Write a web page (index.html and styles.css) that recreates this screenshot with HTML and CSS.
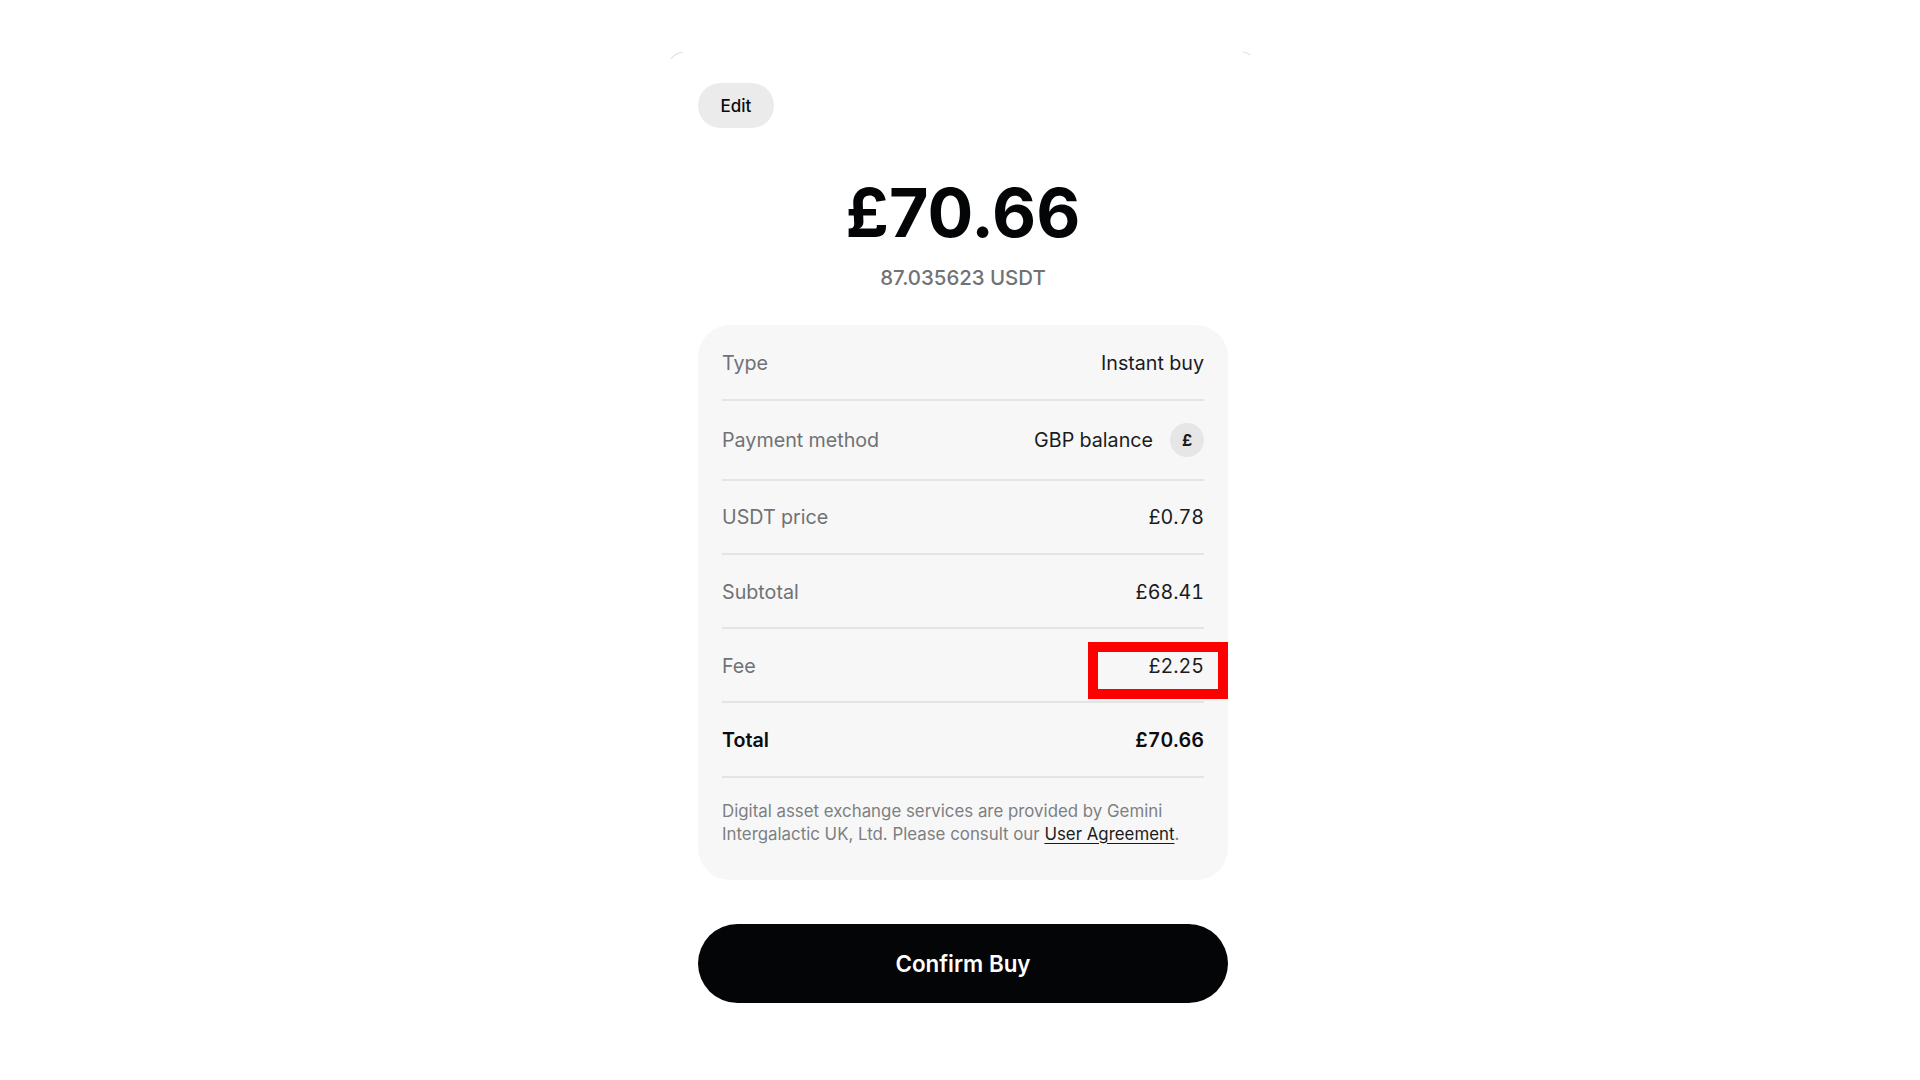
FILE: index.html
```html
<!DOCTYPE html>
<html lang="en">
<head>
<meta charset="utf-8">
<title>Confirm Buy</title>
<link rel="stylesheet" href="styles.css">
</head>
<body>
<main class="sheet">
  <svg class="corner corner-left" width="14" height="9" viewBox="0 0 14 9" aria-hidden="true"><path d="M1 8Q5 2 13 1" fill="none" stroke="#e2e2e2" stroke-width="1.2"/></svg>
  <svg class="corner corner-right" width="9" height="5" viewBox="0 0 9 5" aria-hidden="true"><path d="M1 1Q5 1.5 8 4" fill="none" stroke="#e2e2e2" stroke-width="1.2"/></svg>
  <button class="edit" type="button">Edit</button>
  <header class="summary">
    <h1 class="amount">£70.66</h1>
    <p class="crypto">87.035623 USDT</p>
  </header>
  <section class="card">
    <div class="row row-type"><span class="label">Type</span><span class="value">Instant buy</span></div>
    <div class="row row-pay"><span class="label">Payment method</span><span class="value value-pay">GBP balance<span class="coin">£</span></span></div>
    <div class="row"><span class="label">USDT price</span><span class="value">£0.78</span></div>
    <div class="row row-nudge"><span class="label">Subtotal</span><span class="value">£68.41</span></div>
    <div class="row row-nudge"><span class="label">Fee</span><span class="value">£2.25</span><span class="highlight"></span></div>
    <div class="row row-total"><span class="label">Total</span><span class="value">£70.66</span></div>
    <p class="legal">Digital asset exchange services are provided by Gemini Intergalactic UK, Ltd. Please consult our <a href="#">User Agreement</a>.</p>
  </section>
  <button class="confirm" type="button">Confirm Buy</button>
</main>
</body>
</html>
```
FILE: styles.css
```css
* { box-sizing: border-box; }
html, body { margin: 0; height: 100%; background: #fff; }
body {
  display: flex;
  justify-content: center;
  padding-left: 6px;
  font-family: Inter, "Liberation Sans", sans-serif;
  color: #0b0c0e;
}
.sheet {
  position: relative;
  width: 530px;
  padding-top: 83px;
  display: flex;
  flex-direction: column;
}
.corner { position: absolute; top: 51px; }
.corner-left { left: -28px; }
.corner-right { right: -23px; }
.edit {
  align-self: flex-start;
  width: 76px;
  height: 45px;
  border: 0;
  border-radius: 23px;
  background: #ebebeb;
  font: 500 17px Inter, sans-serif;
  color: #0b0c0e;
  padding: 0;
}
.summary { text-align: center; height: 197px; padding-top: 46px; }
.amount { margin: 0; font-size: 68px; line-height: 76px; font-weight: 700; color: #040506; letter-spacing: 0; }
.crypto { margin: 14px 0 0; font-size: 20.4px; line-height: 28px; font-weight: 500; color: #707275; }
.card {
  background: #f7f7f7;
  border-radius: 32px;
  padding: 0 24px;
  height: 555px;
}
.row {
  position: relative;
  display: flex;
  justify-content: space-between;
  align-items: center;
  height: 74px;
  border-bottom: 2px solid #e4e4e4;
  font-size: 19.7px;
  line-height: 28px;
  font-variant-numeric: tabular-nums;
}
.row-type { height: 76px; padding-top: 2px; }
.row-pay { height: 80px; }
.row-nudge { padding-top: 1px; }
.row-total { height: 75px; }
.label { color: #707275; }
.value { color: #1a1b1d; }
.value-pay { display: flex; align-items: center; gap: 17px; }
.coin {
  width: 34px;
  height: 34px;
  border-radius: 50%;
  background: #e6e6e6;
  display: flex;
  align-items: center;
  justify-content: center;
  font-size: 16px;
  font-weight: 700;
}
.row-total .label { color: #0b0c0e; font-weight: 600; }
.row-total .value { color: #0b0c0e; font-weight: 600; }
.highlight {
  position: absolute;
  right: -24px;
  top: 13px;
  width: 140px;
  height: 57px;
  border: 10px solid #ff0000;
}
.legal { margin: 22px 0 0; font-size: 16.85px; line-height: 22.6px; color: #7d7f82; }
.legal a { color: #1a1b1d; text-decoration: underline; text-underline-offset: 3px; }
.confirm {
  margin-top: 44px;
  height: 79px;
  border: 0;
  border-radius: 40px;
  background: #040506;
  color: #fff;
  font: 600 22.4px Inter, sans-serif;
}
```
